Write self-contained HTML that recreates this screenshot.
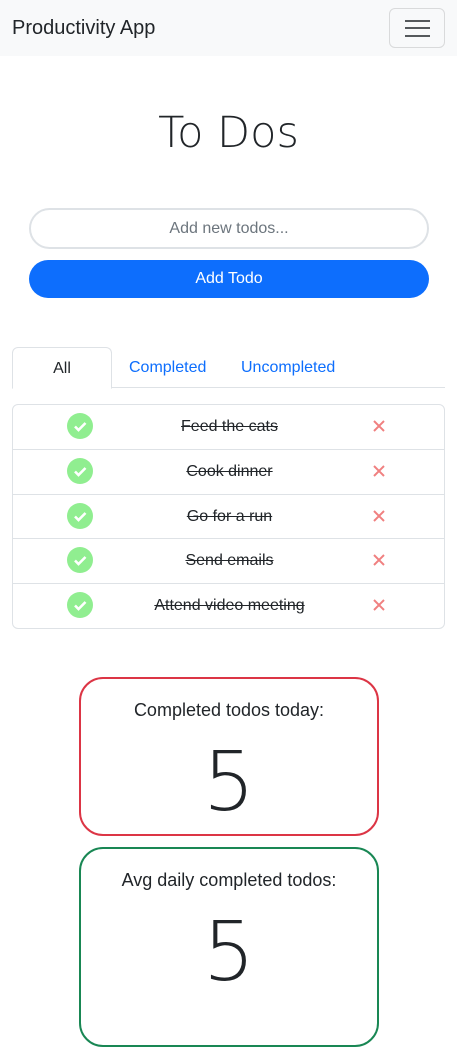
<!DOCTYPE html>
<html><head><style>
*{box-sizing:border-box;margin:0;padding:0}
body{width:457px;height:965px;overflow:hidden;font-family:"Liberation Sans",sans-serif;color:#212529;background:#fff;position:relative}
.nav{position:absolute;top:0;left:0;width:457px;height:56px;background:#f8f9fa}
.brand{position:absolute;left:12px;top:17px;font-size:20px}
.tog{position:absolute;left:389px;top:8px;width:56px;height:40px;border:1px solid #d9dadb;border-radius:6px}
.tog i{position:absolute;left:15px;width:25px;height:2px;background:#55595c}
.light{font-family:"DejaVu Sans ExtraLight","DejaVu Sans","Liberation Sans",sans-serif;font-weight:200}
h1{position:absolute;top:108px;width:100%;text-align:center;font-size:43px}
.inp{position:absolute;left:29px;top:208px;width:400px;height:41px;border:2px solid #dee2e6;border-radius:21px;text-align:center;line-height:37px;color:#6c757d;font-size:16px}
.btn{position:absolute;left:29px;top:260px;width:400px;height:38px;background:#0d6efd;border-radius:19px;color:#fff;text-align:center;line-height:38px;font-size:16px}
.tabline{position:absolute;left:12px;top:387px;width:433px;height:1px;background:#dee2e6}
.tab{position:absolute;top:347px;height:42px;line-height:42px;font-size:16px;color:#0d6efd}
.all{left:12px;width:100px;border:1px solid #dee2e6;border-bottom:1px solid #fff;border-radius:6px 6px 0 0;background:#fff;text-align:center;color:#212529}
.list{position:absolute;left:12px;top:404px;width:433px;height:225px;border:1px solid #dee2e6;border-radius:6px}
.row{height:44.8px;border-bottom:1px solid #dee2e6;position:relative}
.row:last-child{border-bottom:none}
.chk{position:absolute;left:54px;top:8px;width:26px;height:26px;border-radius:50%;background:#90ee90}
.txt{position:absolute;left:0;width:433px;text-align:center;top:13px;font-size:16px;text-decoration:line-through}
.x{position:absolute;left:360px;top:15px}
.card{position:absolute;left:79px;width:300px;border:2px solid;border-radius:24px;text-align:center}
.card p{margin-top:21px;font-size:18px}
.card b{display:block;font-size:82px;margin-top:12px;line-height:100px}
</style></head><body>
<div class="nav"><div class="brand">Productivity App</div><div class="tog"><i style="top:11px"></i><i style="top:18px"></i><i style="top:26px"></i></div></div>
<h1 class="light">To Dos</h1>
<div class="inp">Add new todos...</div>
<div class="btn">Add Todo</div>
<div class="tabline"></div>
<div class="tab all">All</div>
<div class="tab" style="left:129px">Completed</div>
<div class="tab" style="left:241px">Uncompleted</div>
<div class="list">
<div class="row"><div class="chk"><svg width="26" height="26"><path d="M8 13.5l3.5 3.5 7-7" stroke="#fff" stroke-width="2.6" fill="none"/></svg></div><div class="txt">Feed the cats</div><svg class="x" width="12" height="12"><path d="M1 1L11 11M11 1L1 11" stroke="#f08080" stroke-width="2"/></svg></div>
<div class="row"><div class="chk"><svg width="26" height="26"><path d="M8 13.5l3.5 3.5 7-7" stroke="#fff" stroke-width="2.6" fill="none"/></svg></div><div class="txt">Cook dinner</div><svg class="x" width="12" height="12"><path d="M1 1L11 11M11 1L1 11" stroke="#f08080" stroke-width="2"/></svg></div>
<div class="row"><div class="chk"><svg width="26" height="26"><path d="M8 13.5l3.5 3.5 7-7" stroke="#fff" stroke-width="2.6" fill="none"/></svg></div><div class="txt">Go for a run</div><svg class="x" width="12" height="12"><path d="M1 1L11 11M11 1L1 11" stroke="#f08080" stroke-width="2"/></svg></div>
<div class="row"><div class="chk"><svg width="26" height="26"><path d="M8 13.5l3.5 3.5 7-7" stroke="#fff" stroke-width="2.6" fill="none"/></svg></div><div class="txt">Send emails</div><svg class="x" width="12" height="12"><path d="M1 1L11 11M11 1L1 11" stroke="#f08080" stroke-width="2"/></svg></div>
<div class="row"><div class="chk"><svg width="26" height="26"><path d="M8 13.5l3.5 3.5 7-7" stroke="#fff" stroke-width="2.6" fill="none"/></svg></div><div class="txt">Attend video meeting</div><svg class="x" width="12" height="12"><path d="M1 1L11 11M11 1L1 11" stroke="#f08080" stroke-width="2"/></svg></div>
</div>
<div class="card" style="top:677px;height:159px;border-color:#dc3545"><p>Completed todos today:</p><b class="light">5</b></div>
<div class="card" style="top:847px;height:200px;border-color:#198754"><p>Avg daily completed todos:</p><b class="light">5</b></div>
</body></html>
